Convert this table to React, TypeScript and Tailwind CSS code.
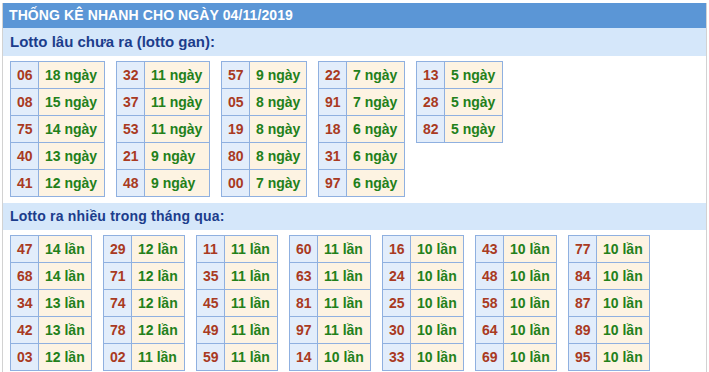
import React from "react";

type Row = [string, string];

const gan: { w: number; rows: Row[] }[] = [
  { w: 66, rows: [["06", "18 ngày"], ["08", "15 ngày"], ["75", "14 ngày"], ["40", "13 ngày"], ["41", "12 ngày"]] },
  { w: 65, rows: [["32", "11 ngày"], ["37", "11 ngày"], ["53", "11 ngày"], ["21", "9 ngày"], ["48", "9 ngày"]] },
  { w: 57, rows: [["57", "9 ngày"], ["05", "8 ngày"], ["19", "8 ngày"], ["80", "8 ngày"], ["00", "7 ngày"]] },
  { w: 58, rows: [["22", "7 ngày"], ["91", "7 ngày"], ["18", "6 ngày"], ["31", "6 ngày"], ["97", "6 ngày"]] },
  { w: 58, rows: [["13", "5 ngày"], ["28", "5 ngày"], ["82", "5 ngày"]] },
];

const nhieu: Row[][] = [
  [["47", "14 lần"], ["68", "14 lần"], ["34", "13 lần"], ["42", "13 lần"], ["03", "12 lần"]],
  [["29", "12 lần"], ["71", "12 lần"], ["74", "12 lần"], ["78", "12 lần"], ["02", "11 lần"]],
  [["11", "11 lần"], ["35", "11 lần"], ["45", "11 lần"], ["49", "11 lần"], ["59", "11 lần"]],
  [["60", "11 lần"], ["63", "11 lần"], ["81", "11 lần"], ["97", "11 lần"], ["14", "10 lần"]],
  [["16", "10 lần"], ["24", "10 lần"], ["25", "10 lần"], ["30", "10 lần"], ["33", "10 lần"]],
  [["43", "10 lần"], ["48", "10 lần"], ["58", "10 lần"], ["64", "10 lần"], ["69", "10 lần"]],
  [["77", "10 lần"], ["84", "10 lần"], ["87", "10 lần"], ["89", "10 lần"], ["95", "10 lần"]],
];

function Table({ rows, w }: { rows: Row[]; w: number }) {
  return (
    <div className="flex flex-col border-l border-t border-[#8fb0e0] self-start">
      {rows.map(([n, v], i) => (
        <div key={i} className="flex h-[27px]">
          <div className="w-[28px] border-r border-b border-[#8fb0e0] bg-[#e2edfb] pl-[6px] leading-[26px] text-[#a93a22]">
            {n}
          </div>
          <div
            className="border-r border-b border-[#8fb0e0] bg-[#fdf3e2] pl-[6px] leading-[26px] text-[#22801a] whitespace-nowrap"
            style={{ width: w }}
          >
            {v}
          </div>
        </div>
      ))}
    </div>
  );
}

export default function App() {
  return (
    <div className="w-[709px] h-[372px] overflow-hidden bg-white pt-[3px] font-['Liberation_Sans',Arial,sans-serif] font-bold text-[14px]">
      <div className="ml-[2px] w-[705px] h-[369px] border-x border-[#d2d2d2]">
        <div className="h-[25px] bg-[#5b96d6] pl-[6px] leading-[25px] text-white tracking-[0.1px]">
          THỐNG KÊ NHANH CHO NGÀY 04/11/2019
        </div>
        <div className="h-[28px] bg-[#d5e7fa] pl-[7px] leading-[28px] text-[#1c3d8c] text-[15px]">
          Lotto lâu chưa ra (lotto gan):
        </div>
        <div className="flex gap-[11px] pl-[7px] pt-[5px] pb-[6px]">
          {gan.map((t, i) => (
            <Table key={i} rows={t.rows} w={t.w} />
          ))}
        </div>
        <div className="h-[27px] bg-[#d5e7fa] pl-[7px] leading-[27px] text-[#1c3d8c] tracking-[0.2px]">
          Lotto ra nhiều trong tháng qua:
        </div>
        <div className="flex gap-[11px] pl-[7px] pt-[5px]">
          {nhieu.map((t, i) => (
            <Table key={i} rows={t} w={53} />
          ))}
        </div>
      </div>
    </div>
  );
}
